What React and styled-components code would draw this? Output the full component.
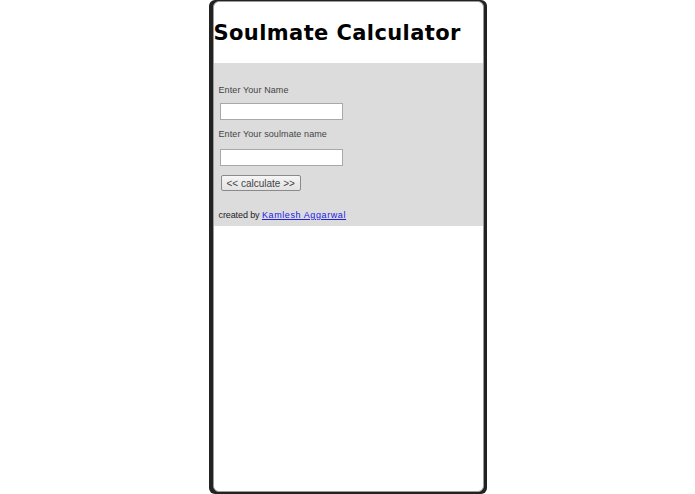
import React from 'react';
import styled, { createGlobalStyle } from 'styled-components';

const GlobalStyle = createGlobalStyle`
  html, body {
    margin: 0;
    padding: 0;
    background: #ffffff;
  }
`;

const Page = styled.div`
  display: flex;
  justify-content: center;
  height: 494px;
  box-sizing: border-box;
`;

const Phone = styled.div`
  width: 278px;
  height: 494px;
  box-sizing: border-box;
  background: #222;
  padding: 1px 3px 2px 4px;
  border-radius: 6px;
`;

const Screen = styled.div`
  height: 100%;
  box-sizing: border-box;
  background: #fff;
  border: 1px solid #9a9a9a;
  border-radius: 6px;
  overflow: hidden;
  display: flex;
  flex-direction: column;
`;

const Title = styled.h1`
  margin: 0;
  padding: 18px 0 0 0;
  height: 61px;
  box-sizing: border-box;
  font-family: 'DejaVu Sans', 'Open Sans', sans-serif;
  font-weight: bold;
  font-size: 21px;
  line-height: 26px;
  letter-spacing: 0.4px;
  white-space: nowrap;
  color: #000;
`;

const Panel = styled.div`
  background: #dcdcdc;
  padding: 22px 5px 6px 5px;
  display: flex;
  flex-direction: column;
  align-items: flex-start;
`;

const Label = styled.label`
  margin-top: ${({ $top }) => $top || 0}px;
  font-family: 'Liberation Sans', Arial, sans-serif;
  font-size: 9px;
  font-weight: normal;
  color: #444;
  letter-spacing: 0.1px;
`;

const Input = styled.input`
  width: 123px;
  height: 17px;
  box-sizing: border-box;
  margin: ${({ $top }) => $top}px 0 0 1px;
  border: 1px solid #a8a8a8;
  background: #fff;
  padding: 0;
`;

const Button = styled.button`
  margin: 9px 0 0 2px;
  height: 16px;
  padding: 0 5px;
  font-family: 'Liberation Sans', Arial, sans-serif;
  font-size: 10px;
  color: #444;
  background: linear-gradient(#f6f6f6, #e2e2e2);
  border: 1px solid #8a8a8a;
  border-radius: 2px;
`;

const Credit = styled.p`
  margin: 19px 0 0 0;
  font-family: 'Liberation Sans', Arial, sans-serif;
  font-size: 9px;
  letter-spacing: -0.1px;
  color: #222;
`;

const Link = styled.a`
  color: #2020e0;
  letter-spacing: 0.6px;
  text-decoration: underline;
`;

export default function App() {
  return (
    <>
      <GlobalStyle />
      <Page>
        <Phone>
          <Screen>
            <Title>Soulmate Calculator</Title>
            <Panel>
              <Label>Enter Your Name</Label>
              <Input $top={8} />
              <Label $top={9}>Enter Your soulmate name</Label>
              <Input $top={10} />
              <Button>&lt;&lt; calculate &gt;&gt;</Button>
              <Credit>
                created by <Link href="#">Kamlesh Aggarwal</Link>
              </Credit>
            </Panel>
          </Screen>
        </Phone>
      </Page>
    </>
  );
}
